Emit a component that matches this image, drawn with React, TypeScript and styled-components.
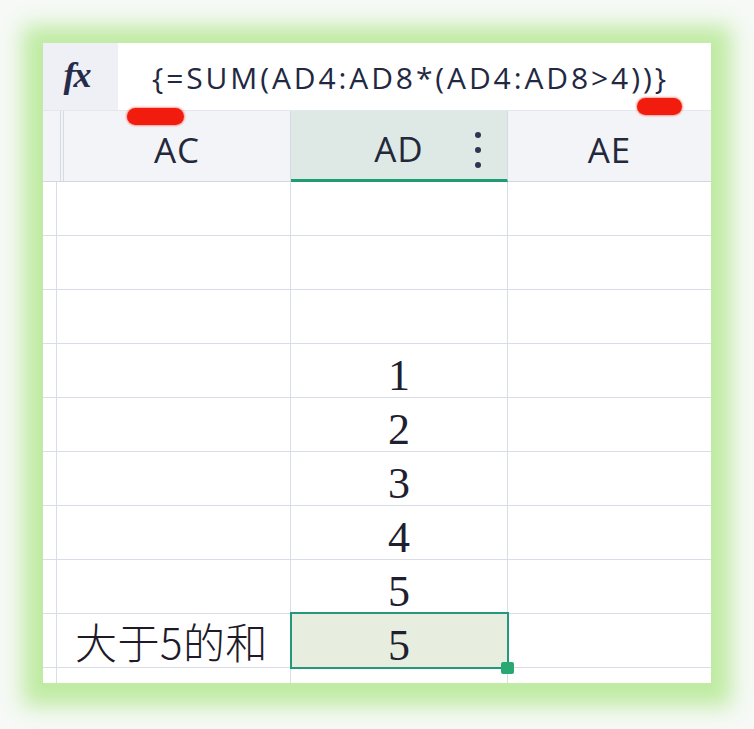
import React from 'react';
import styled, { createGlobalStyle } from 'styled-components';

const GlobalStyle = createGlobalStyle`
  html, body {
    margin: 0;
    padding: 0;
    background: #f6f9f6;
  }
  * {
    box-sizing: border-box;
  }
`;

const Page = styled.div`
  width: 754px;
  height: 729px;
  padding: 43px 0 0 43px;
  overflow: hidden;
`;

const Card = styled.div`
  position: relative;
  width: 668px;
  height: 640px;
  background: #ffffff;
  overflow: hidden;
  box-shadow: 0 3px 20px 20px #bfeba2;
`;

const FormulaBar = styled.div`
  display: flex;
  height: 67px;
`;

const FxCell = styled.div`
  width: 75px;
  display: flex;
  align-items: center;
  justify-content: center;
  padding: 0 8px 4px 0;
  background: #eef0f6;
  font-family: 'Liberation Serif', 'DejaVu Serif', serif;
  font-style: italic;
  font-weight: 700;
  font-size: 36px;
  letter-spacing: -2px;
  color: #262b4a;
`;

const FormulaInput = styled.div`
  flex: 1;
  padding: 1px 0 0 34px;
  line-height: 67px;
  font-family: 'Open Sans', 'Liberation Sans', sans-serif;
  font-size: 30px;
  letter-spacing: 2.9px;
  color: #232842;
  white-space: nowrap;
`;

const HeaderRow = styled.div`
  display: grid;
  grid-template-columns: 21px 227px 217px 1fr;
  height: 72px;
  background: #f3f4f8;
  border-top: 1px solid #e4e7ee;
  border-bottom: 1px solid #d3d8e0;
`;

const Corner = styled.div`
  position: relative;
  border-right: 1px solid #d6dae3;
  &::before {
    content: '';
    position: absolute;
    top: 0;
    bottom: 0;
    left: 17px;
    border-left: 1px solid #d6dae3;
  }
`;

const ColHeader = styled.div<{ $active?: boolean; $last?: boolean }>`
  position: relative;
  display: flex;
  align-items: center;
  justify-content: center;
  padding-top: 6px;
  font-family: 'Open Sans', 'Liberation Sans', sans-serif;
  font-weight: 400;
  font-size: 35px;
  letter-spacing: 1px;
  color: #23283a;
  background: ${p => (p.$active ? '#dee9e6' : 'transparent')};
  border-right: ${p => (p.$last ? 'none' : '1px solid #d6dae3')};
  border-bottom: ${p => (p.$active ? '3px solid #1e9c74' : 'none')};
  margin-bottom: ${p => (p.$active ? '-1px' : '0')};
`;

const Dots = styled.span`
  position: absolute;
  right: 26px;
  top: 21px;
  display: flex;
  flex-direction: column;
  gap: 9px;
  & > i {
    width: 6px;
    height: 6px;
    border-radius: 50%;
    background: #2d3552;
  }
`;

const Body = styled.div`
  display: flex;
  flex-direction: column;
`;

const Row = styled.div`
  display: grid;
  grid-template-columns: 14px 234px 217px 1fr;
  height: 54px;
  border-bottom: 1px solid #d9dde8;
`;

const Cell = styled.div<{ $selected?: boolean; $last?: boolean }>`
  position: relative;
  height: 53px;
  border-right: ${p => (p.$last ? 'none' : '1px solid #d9dde8')};
  background: ${p => (p.$selected ? '#e7eee0' : '#ffffff')};
`;

const NumberText = styled.div`
  padding-top: 11px;
  line-height: 42px;
  text-align: center;
  font-family: 'Liberation Serif', 'DejaVu Serif', serif;
  font-size: 44px;
  color: #1e2030;
`;

const LabelText = styled.div`
  padding-left: 18px;
  line-height: 53px;
  font-family: 'Noto Sans CJK SC', 'Noto Sans', sans-serif;
  font-weight: 300;
  font-size: 42px;
  letter-spacing: 0.5px;
  color: #1e1a2a;
  white-space: nowrap;
`;

const SelectionFrame = styled.div`
  position: absolute;
  z-index: 2;
  left: -1px;
  top: -2px;
  right: -2px;
  bottom: -2px;
  border: 2px solid #24987a;
  pointer-events: none;
`;

const FillHandle = styled.div`
  position: absolute;
  z-index: 3;
  left: 210px;
  top: 48px;
  width: 13px;
  height: 12px;
  background: #2aa872;
  border-radius: 2px;
`;

const Mark = styled.div<{ $w: number }>`
  position: absolute;
  z-index: 4;
  width: ${p => p.$w}px;
  height: 17px;
  border-radius: 9px;
  background: #f21c0e;
  box-shadow: 0 0 2px 1px rgba(242, 40, 20, 0.45);
`;

const values: (string | null)[] = [null, null, null, '1', '2', '3', '4', '5'];

const App: React.FC = () => {
  return (
    <>
      <GlobalStyle />
      <Page>
        <Card>
          <FormulaBar>
            <FxCell>fx</FxCell>
            <FormulaInput>{'{=SUM(AD4:AD8*(AD4:AD8>4))}'}</FormulaInput>
          </FormulaBar>
          <HeaderRow>
            <Corner />
            <ColHeader>AC</ColHeader>
            <ColHeader $active>
              AD
              <Dots>
                <i />
                <i />
                <i />
              </Dots>
            </ColHeader>
            <ColHeader $last>AE</ColHeader>
          </HeaderRow>
          <Body>
            {values.map((v, i) => (
              <Row key={i}>
                <Cell />
                <Cell />
                <Cell>{v && <NumberText>{v}</NumberText>}</Cell>
                <Cell $last />
              </Row>
            ))}
            <Row>
              <Cell />
              <Cell>
                <LabelText>大于5的和</LabelText>
              </Cell>
              <Cell $selected>
                <NumberText>5</NumberText>
                <SelectionFrame />
                <FillHandle />
              </Cell>
              <Cell $last />
            </Row>
            <Row>
              <Cell />
              <Cell />
              <Cell />
              <Cell $last />
            </Row>
          </Body>
          <Mark $w={57} style={{ left: 84, top: 65 }} />
          <Mark $w={45} style={{ left: 594, top: 55 }} />
        </Card>
      </Page>
    </>
  );
};

export default App;
